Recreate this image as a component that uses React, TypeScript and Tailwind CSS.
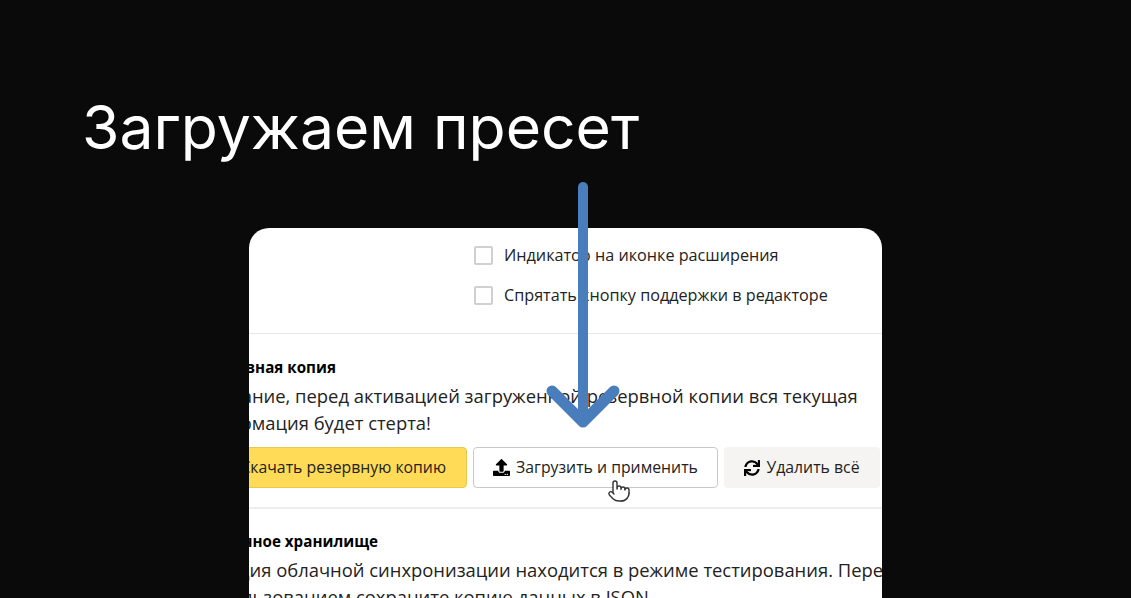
import { Pointer } from 'lucide-react'
import { FaSync, FaUpload, FaDownload } from 'react-icons/fa'

const OPTIONS = ['Индикатор на иконке расширения', 'Спрятать кнопку поддержки в редакторе']

function Arrow() {
  return (
    <svg className="absolute left-[540px] top-[175px]" width="90" height="260" viewBox="0 0 90 260" fill="none">
      <path d="M43 12V247" stroke="#4a7dbb" strokeWidth="10" strokeLinecap="round" />
      <path d="M12 216L43 247L74 216" stroke="#4a7dbb" strokeWidth="11" strokeLinecap="round" strokeLinejoin="round" />
    </svg>
  )
}

export default function App() {
  return (
    <div className="relative h-[598px] w-[1131px] overflow-hidden bg-[#0a0a0a]">
      <h1 className="pl-[82px] pt-[91px] text-[60.6px] leading-[72px] font-normal text-white font-['Inter',sans-serif]">
        Загружаем пресет
      </h1>

      <div className="ml-[249px] mt-[65px] h-[400px] w-[633px] overflow-hidden rounded-t-[20px] bg-white font-['Open_Sans',sans-serif] text-[#222]">
        <div className="flex h-[106px] flex-col gap-[20px] border-b border-[#e8e8e8] pl-[225px] pt-[17px]">
          {OPTIONS.map(label => (
            <label key={label} className="flex h-[20px] items-center gap-[11px] text-[16.2px]">
              <span className="h-[19px] w-[19px] rounded-[2px] border-2 border-[#d0d0d0]" />
              {label}
            </label>
          ))}
        </div>

        <div className="ml-[-47px] w-[720px] pt-[22px]">
          <h3 className="ml-[-2px] text-[15.2px] leading-[22px] font-bold text-black">Резервная копия</h3>
          <p className="ml-[-9px] mt-[4px] w-[720px] text-[18.4px] leading-[27px]">
            Внимание, перед активацией загруженной резервной копии вся текущая
            <br />
            информация будет стерта!
          </p>
          <div className="mt-[11px] flex gap-[6px] text-[15.8px]">
            <button className="ml-[-20px] flex h-[41px] w-[285px] items-center justify-end rounded-[4px] border border-[#e8c84e] bg-[#ffdb57] pr-[20px]">
              <FaDownload className="mr-[8px] text-[15px]" />
              Скачать резервную копию
            </button>
            <button className="flex h-[41px] w-[245px] items-center justify-center gap-[6px] rounded-[4px] border border-[#c9c9c9] bg-white">
              <FaUpload className="text-[17px] text-black" />
              Загрузить и применить
            </button>
            <button className="flex h-[41px] w-[156px] items-center justify-center gap-[6px] rounded-[4px] bg-[#f5f4f3]">
              <FaSync className="text-[16px] text-black" />
              Удалить всё
            </button>
          </div>
        </div>

        <div className="ml-[-47px] mt-[19px] w-[800px] border-t-2 border-[#eeeeee] pt-[21px]">
          <h3 className="text-[15.2px] leading-[22px] font-bold text-black">Облачное хранилище</h3>
          <p className="ml-[-9px] mt-[4px] whitespace-nowrap text-[18.4px] leading-[27px]">
            Функция облачной синхронизации находится в режиме тестирования. Перед
            <span className="block pl-[6px]">использованием сохраните копию данных в JSON</span>
          </p>
        </div>
      </div>

      <Arrow />
      <Pointer size={24} strokeWidth={1.4} fill="#fff" className="absolute left-[607px] top-[479px] text-[#333]" />
    </div>
  )
}
